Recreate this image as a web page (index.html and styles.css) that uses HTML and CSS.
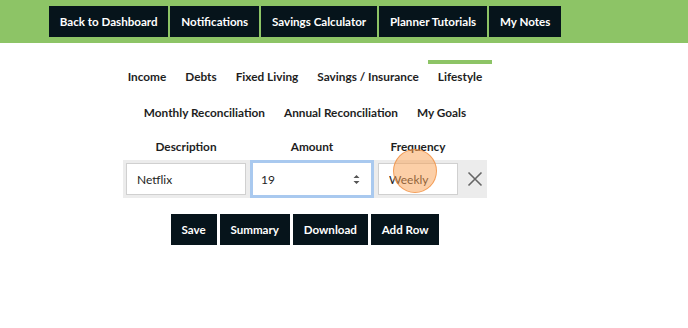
FILE: index.html
```html
<!DOCTYPE html>
<html>
<head>
<meta charset="utf-8">
<link rel="stylesheet" href="styles.css">
</head>
<body>
<header class="topbar">
  <nav class="topnav">
    <a class="btn">Back to Dashboard</a>
    <a class="btn">Notifications</a>
    <a class="btn">Savings Calculator</a>
    <a class="btn">Planner Tutorials</a>
    <a class="btn">My Notes</a>
  </nav>
</header>
<main class="content">
  <nav class="tabs">
    <a class="tab">Income</a>
    <a class="tab">Debts</a>
    <a class="tab">Fixed Living</a>
    <a class="tab">Savings / Insurance</a>
    <a class="tab active">Lifestyle</a>
    <a class="tab">Monthly Reconciliation</a>
    <a class="tab">Annual Reconciliation</a>
    <a class="tab">My Goals</a>
  </nav>
  <div class="table">
    <div class="thead">
      <div class="th c-desc">Description</div>
      <div class="th c-amt">Amount</div>
      <div class="th c-freq">Frequency</div>
    </div>
    <div class="row">
      <div class="field c-desc"><input class="inp" value="Netflix"></div>
      <div class="field c-amt focused"><input class="inp" value="19"><span class="spin"><svg width="7" height="11" viewBox="0 0 7 11"><path d="M0.5 4 L3.5 1 L6.5 4 Z M0.5 7 L3.5 10 L6.5 7 Z" fill="#555"/></svg></span></div>
      <div class="field c-freq"><input class="inp" value="Weekly"></div>
      <span class="remove"><svg width="16" height="16" viewBox="0 0 16 16"><path d="M1.5 1.5 L14.5 14.5 M14.5 1.5 L1.5 14.5" stroke="#666" stroke-width="1.6"/></svg></span>
      <span class="click-dot"></span>
    </div>
  </div>
  <div class="actions">
    <a class="btn">Save</a>
    <a class="btn">Summary</a>
    <a class="btn">Download</a>
    <a class="btn">Add Row</a>
  </div>
</main>
</body>
</html>
```

FILE: styles.css
```css
* { box-sizing: border-box; }
html, body { margin: 0; padding: 0; background: #fff; }
body { font-family: Lato, "Open Sans", sans-serif; font-weight: 700; color: #1e1e1e; }
.topbar { background: #8dc466; height: 43px; padding-top: 6px; }
.topnav { display: flex; justify-content: center; gap: 2px; width: 610px; }
.btn {
  display: inline-flex; align-items: center; justify-content: center;
  background: #06141b; color: #fff; font-size: 11.6px; height: 31px;
  padding: 0 10.9px; text-decoration: none; white-space: nowrap;
}
.content { display: flex; flex-direction: column; align-items: center; width: 610px; }
.tabs {
  display: flex; flex-wrap: wrap; justify-content: center;
  width: 400px; margin-top: 17px;
}
.tab {
  font-size: 11.8px; line-height: 16px; color: #1e1e1e;
  border-top: 4px solid transparent; padding: 5px 9.5px 11px;
  white-space: nowrap;
}
.tab.active { border-top-color: #8dc466; }
.table { margin-top: 4px; width: 364px; }
.thead { display: flex; height: 24px; align-items: center; padding: 0 3px 4px; gap: 4px; font-size: 11.8px; }
.th { text-align: center; }
.c-desc { width: 120px; }
.c-amt { width: 124px; }
.c-freq { width: 80px; }
.row {
  position: relative; display: flex; align-items: center; gap: 4px;
  background: #ececec; height: 38px; padding: 0 3px;
}
.field {
  display: flex; align-items: center; height: 32px; background: #fff;
  border: 1px solid #d0d0d0;
}
.field.focused { height: 38px; border: 3px solid #a9c9ef; padding-right: 11px; }
.inp {
  border: 0; outline: 0; background: transparent; width: 100%; min-width: 0;
  font-family: Lato, "Open Sans", sans-serif; font-size: 12px; color: #1e1e1e;
  padding: 0 0 0 10px;
}
.focused .inp { padding-left: 8px; }
.spin { display: flex; align-items: center; }
.remove { display: flex; margin-left: 5px; }
.click-dot {
  position: absolute; left: 270px; top: -11px;
  width: 44px; height: 44px; border-radius: 50%;
  background: rgba(250, 160, 80, 0.5); border: 1.5px solid rgba(240, 140, 60, 0.75);
}
.actions { display: flex; gap: 3px; margin-top: 16px; }
```
